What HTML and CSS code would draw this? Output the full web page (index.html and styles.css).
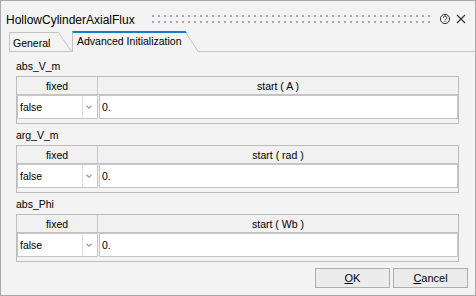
FILE: index.html
```html
<!DOCTYPE html>
<html>
<head>
<meta charset="utf-8">
<link rel="stylesheet" href="styles.css">
</head>
<body>
<div class="win">
  <div class="titlebar">
    <span class="title">HollowCylinderAxialFlux</span>
    <div class="grip"></div>
    <svg class="help" width="12" height="12" viewBox="0 0 12 12">
      <circle cx="6" cy="6" r="4.6" fill="none" stroke="#333" stroke-width="1"/>
      <path d="M4.4 4.9 A1.7 1.7 0 1 1 6.7 6.3 C6.1 6.6 6 6.9 6 7.4" fill="none" stroke="#333" stroke-width="1"/>
      <rect x="5.5" y="8.2" width="1" height="1" fill="#333"/>
    </svg>
    <svg class="close" width="10" height="10" viewBox="0 0 10 10">
      <path d="M1 1 L9 9 M9 1 L1 9" stroke="#333" stroke-width="1.1" fill="none"/>
    </svg>
  </div>

  <div class="tabs">
    <div class="tab tab-general">
      <span class="tab-label">General</span>
      <svg class="slant" width="14" height="20" viewBox="0 0 14 20">
        <path d="M0 0.5 L0.5 0.5 L13.5 19.5" fill="none" stroke="#c4c4c4" stroke-width="1"/>
        <path d="M0 19.5 L14 19.5" stroke="#c4c4c4" stroke-width="1"/>
      </svg>
    </div>
    <div class="tab tab-active">
      <span class="tab-label">Advanced Initialization</span>
      <svg class="slant" width="14" height="21" viewBox="0 0 14 21">
        <polygon points="0,0 0.6,0 2,2 0,2" fill="#1a7cc2"/>
        <path d="M0.8 2 L13.5 21" fill="none" stroke="#c4c4c4" stroke-width="1"/>
      </svg>
    </div>
    <div class="tab-rest"></div>
  </div>

  <div class="pane">
    <div class="section">
      <div class="sec-label">abs_V_m</div>
      <div class="ptable">
        <div class="phead">
          <div class="hcell hfixed">fixed</div>
          <div class="hcell">start ( A )</div>
        </div>
        <div class="prow">
          <div class="combo">
            <span class="combo-text">false</span>
            <span class="combo-arrow"><svg width="6" height="4" viewBox="0 0 6 4"><path d="M0.5 0.8 L3 3.2 L5.5 0.8" fill="none" stroke="#9a9a9a" stroke-width="1.2"/></svg></span>
          </div>
          <div class="value">0.</div>
        </div>
        <div class="filler"></div>
      </div>
    </div>

    <div class="section">
      <div class="sec-label">arg_V_m</div>
      <div class="ptable">
        <div class="phead">
          <div class="hcell hfixed">fixed</div>
          <div class="hcell">start ( rad )</div>
        </div>
        <div class="prow">
          <div class="combo">
            <span class="combo-text">false</span>
            <span class="combo-arrow"><svg width="6" height="4" viewBox="0 0 6 4"><path d="M0.5 0.8 L3 3.2 L5.5 0.8" fill="none" stroke="#9a9a9a" stroke-width="1.2"/></svg></span>
          </div>
          <div class="value">0.</div>
        </div>
        <div class="filler"></div>
      </div>
    </div>

    <div class="section">
      <div class="sec-label">abs_Phi</div>
      <div class="ptable">
        <div class="phead">
          <div class="hcell hfixed">fixed</div>
          <div class="hcell">start ( Wb )</div>
        </div>
        <div class="prow">
          <div class="combo">
            <span class="combo-text">false</span>
            <span class="combo-arrow"><svg width="6" height="4" viewBox="0 0 6 4"><path d="M0.5 0.8 L3 3.2 L5.5 0.8" fill="none" stroke="#9a9a9a" stroke-width="1.2"/></svg></span>
          </div>
          <div class="value">0.</div>
        </div>
        <div class="filler"></div>
      </div>
    </div>
  </div>

  <div class="buttons">
    <button class="btn"><u>O</u>K</button>
    <button class="btn"><u>C</u>ancel</button>
  </div>
</div>
</body>
</html>
```

FILE: styles.css
```css
* {
  box-sizing: border-box;
  margin: 0;
  padding: 0;
}

body {
  margin: 0;
  background: #f3f3f3;
  font-family: "Liberation Sans", Arial, sans-serif;
  color: #000;
}

.win {
  width: 476px;
  height: 296px;
  border: 1px solid #a9a9a9;
  background: #f3f3f3;
  display: flex;
  flex-direction: column;
  overflow: hidden;
}

/* title bar */
.titlebar {
  height: 30px;
  display: flex;
  align-items: flex-start;
  padding: 0 9px 0 5px;
}

.title {
  font-size: 12px;
  line-height: 14px;
  margin-top: 12px;
  white-space: nowrap;
}

.grip {
  flex: 1;
  height: 8px;
  margin: 14px 0 0 17px;
  background: conic-gradient(from 270deg at 2px 2px, #a8a8a8 25%, transparent 0) 0 0 / 6px 6px;
}

.help {
  margin: 12px 0 0 7px;
  flex: none;
}

.close {
  margin: 13px 0 0 5px;
  flex: none;
}

/* tabs */
.tabs {
  display: flex;
  align-items: flex-end;
  height: 21px;
  padding-left: 8px;
}

.tab {
  display: flex;
  font-size: 10.5px;
  white-space: nowrap;
}

.tab-general {
  height: 20px;
}

.tab-general .tab-label {
  width: 49px;
  border: 1px solid #c4c4c4;
  border-right: none;
  padding: 3px 0 0 3px;
  line-height: 15px;
}

.tab-active {
  height: 21px;
}

.tab-active .tab-label {
  width: 113px;
  border-top: 2px solid #1a7cc2;
  border-left: 1px solid #c4c4c4;
  padding: 1px 0 0 4px;
  line-height: 15px;
}

.slant {
  display: block;
  flex: none;
}

.tab-rest {
  flex: 1;
  height: 21px;
  border-bottom: 1px solid #c4c4c4;
}

/* pane */
.pane {
  display: flex;
  flex-direction: column;
  padding: 3px 16px 0 15px;
}

.sec-label {
  font-size: 10.5px;
  line-height: 13px;
  padding: 5px 0 3px;
}

.ptable {
  border: 1px solid #bcbcbc;
  background: #f3f3f3;
}

.phead {
  display: grid;
  grid-template-columns: 81px 1fr;
  height: 18px;
  border-bottom: 1px solid #c2c2c2;
  background: #f1f1f1;
}

.hcell {
  font-size: 10.5px;
  line-height: 16px;
  padding-top: 1px;
  text-align: center;
}

.hfixed {
  border-right: 1px solid #cacaca;
}

.prow {
  display: flex;
  height: 24px;
}

.combo {
  width: 81px;
  display: flex;
  border: 1px solid #c6c6c6;
  background: #fff;
}

.combo-text {
  flex: 1;
  font-size: 10.5px;
  line-height: 22px;
  padding-left: 2px;
}

.combo-arrow {
  width: 15px;
  border-left: 1px solid #dedede;
  display: flex;
  align-items: center;
  justify-content: center;
}

.combo-arrow svg {
  display: block;
  margin-right: 2px;
}

.value {
  flex: 1;
  margin-left: 1px;
  border: 1px solid #c6c6c6;
  background: #fff;
  font-size: 10.5px;
  line-height: 22px;
  padding-left: 2px;
}

.filler {
  height: 4px;
}

/* buttons */
.buttons {
  margin-top: auto;
  display: flex;
  justify-content: flex-end;
  gap: 3px;
  padding: 0 7px 7px 0;
}

.btn {
  width: 75px;
  height: 20px;
  border: 1px solid #adadad;
  background: #ececec;
  font-family: "Liberation Sans", Arial, sans-serif;
  font-size: 11px;
  line-height: 18px;
  color: #000;
  text-align: center;
}
```
